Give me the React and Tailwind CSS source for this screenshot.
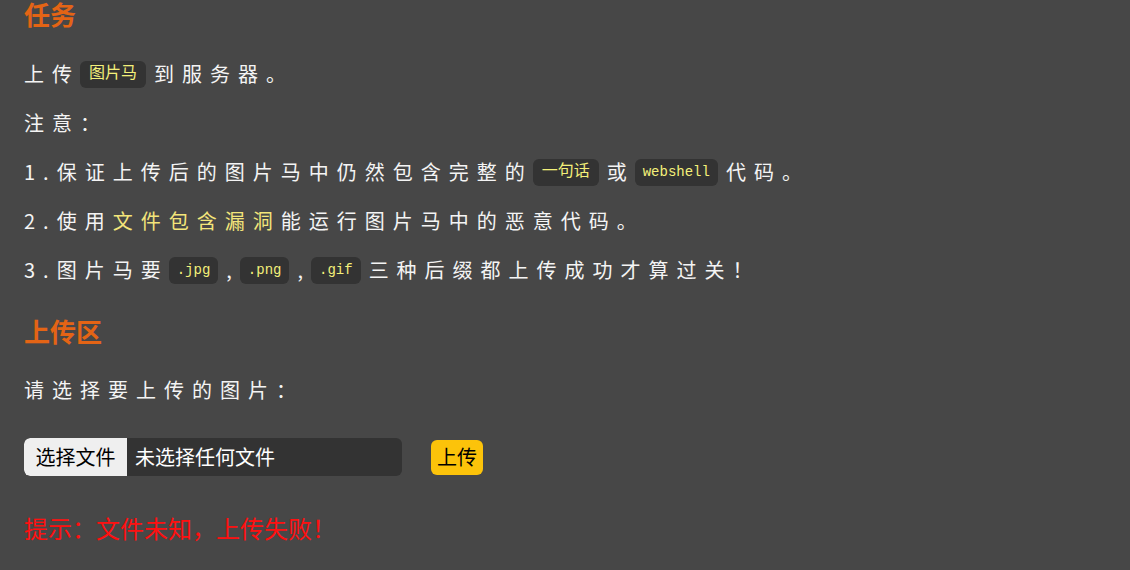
import React from 'react';

const body = { fontFamily: '"Noto Sans CJK SC", "Noto Sans", sans-serif' };
const mono = { fontFamily: '"Liberation Mono", "Noto Sans CJK SC", monospace' };

const Code = ({ children, cjk }) => (
  <code
    className={
      'inline-block bg-[#333333] text-[#f3f07a] leading-[27px] rounded-md tracking-normal align-middle mr-[8px] ' +
      (cjk ? 'text-[16px] px-[9px]' : 'text-[14px] px-[8px]')
    }
    style={mono}
  >
    {children}
  </code>
);

const App = () => {
  return (
    <div className="w-[1130px] h-[570px] bg-[#474747] text-[#f4f4f4] px-6 overflow-hidden" style={body}>
      <h2 className="text-[26px] font-bold text-[#e46415] leading-[28px]">任务</h2>
      <div className="text-[20px] tracking-[8px] leading-[30px] mt-[31px] flex flex-col gap-[19px]">
        <p className="flex items-center">
          <span>上传</span>
          <Code cjk>图片马</Code>
          <span>到服务器。</span>
        </p>
        <p>注意：</p>
        <p className="flex items-center">
          <span>1.保证上传后的图片马中仍然包含完整的</span>
          <Code cjk>一句话</Code>
          <span>或</span>
          <Code>webshell</Code>
          <span>代码。</span>
        </p>
        <p>
          2.使用<span className="text-[#f3e57a]">文件包含漏洞</span>能运行图片马中的恶意代码。
        </p>
        <p className="flex items-center">
          <span>3.图片马要</span>
          <Code>.jpg</Code>
          <span>,</span>
          <Code>.png</Code>
          <span>,</span>
          <Code>.gif</Code>
          <span>三种后缀都上传成功才算过关！</span>
        </p>
      </div>
      <h2 className="text-[26px] font-bold text-[#e46415] leading-[28px] mt-[32px]">上传区</h2>
      <p className="text-[20px] tracking-[8px] leading-[30px] mt-[30px]">请选择要上传的图片：</p>
      <div className="flex items-center mt-[33px]">
        <div className="flex items-center w-[378px] h-[38px] bg-[#333333] rounded-md overflow-hidden">
          <span className="h-full w-[103px] bg-[#efefef] text-black text-[20px] flex items-center justify-center rounded-l-md">
            选择文件
          </span>
          <span className="text-[20px] text-white ml-2">未选择任何文件</span>
        </div>
        <button className="ml-[29px] h-[35px] w-[52px] bg-[#fcc30a] text-black text-[20px] rounded-md flex items-center justify-center">
          上传
        </button>
      </div>
      <p className="text-[24px] text-[#ff1010] mt-[37px] leading-[30px]">提示：文件未知，上传失败！</p>
    </div>
  );
};

export default App;
